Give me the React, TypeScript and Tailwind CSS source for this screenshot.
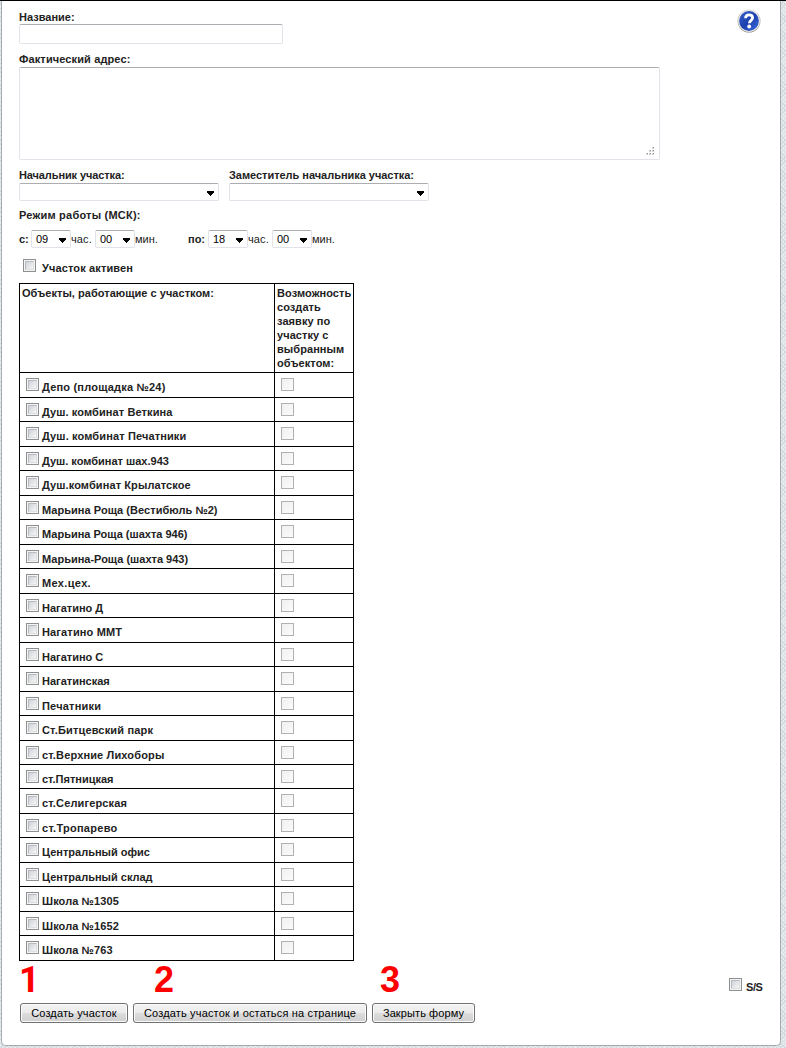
import React from "react";

const rows: [string, string][] = [
  ["Депо (площадка №24)", "tracking-[0.2px]"],
  ["Душ. комбинат Веткина", "tracking-[0.1px]"],
  ["Душ. комбинат Печатники", "tracking-[0.13px]"],
  ["Душ. комбинат шах.943", ""],
  ["Душ.комбинат Крылатское", "tracking-[0.1px]"],
  ["Марьина Роща (Вестибюль №2)", "tracking-[0.04px]"],
  ["Марьина Роща (шахта 946)", ""],
  ["Марьина-Роща (шахта 943)", ""],
  ["Мех.цех.", "tracking-[0.35px]"],
  ["Нагатино Д", ""],
  ["Нагатино ММТ", "tracking-[0.15px]"],
  ["Нагатино С", ""],
  ["Нагатинская", ""],
  ["Печатники", "tracking-[0.2px]"],
  ["Ст.Битцевский парк", "tracking-[0.17px]"],
  ["ст.Верхние Лихоборы", "tracking-[0.15px]"],
  ["ст.Пятницкая", ""],
  ["ст.Селигерская", "tracking-[0.15px]"],
  ["ст.Тропарево", "tracking-[0.27px]"],
  ["Центральный офис", ""],
  ["Центральный склад", ""],
  ["Школа №1305", "tracking-[0.1px]"],
  ["Школа №1652", "tracking-[0.1px]"],
  ["Школа №763", "tracking-[0.1px]"],
];

const objects = rows.map(([name, tracking], i) => ({
  name,
  tracking,
  h: (i < 16 ? i % 2 === 0 : i % 2 === 1) ? "h-[25px]" : "h-[24px]",
}));

function Box({ disabled = false }: { disabled?: boolean }) {
  return disabled ? (
    <span className="block size-[13px] shrink-0 border border-[#b1b1b1] bg-gradient-to-br from-[#f0f0f0] to-[#fbfbfb]" />
  ) : (
    <span className="block size-[13px] shrink-0 border border-[#8e8f8f] bg-[#f4f4f4] p-px">
      <span className="block size-[9px] border border-[#b8bcc2] border-r-[#dcdfe2] border-b-[#dcdfe2] bg-gradient-to-br from-[#cfd3d8] to-[#f6f6f6]" />
    </span>
  );
}

const field = "rounded-[2px] border border-[#e2e3ea] border-t-[#abadb3] bg-white";

function Select({ value = "", width }: { value?: string; width: string }) {
  return (
    <div className={`${field} ${width} flex h-[18px] shrink-0 items-center justify-between pr-[3px] pl-1 text-black`}>
      <span>{value}</span>
      <svg width="9" height="5" viewBox="0 0 9 5" className="mt-[3px]" shapeRendering="crispEdges">
        <path d="M1 0h7v1h-7zM1 1h7v1h-7zM2 2h5v1h-5zM3 3h3v1h-3zM4 4h1v1h-1z" fill="#000" />
      </svg>
    </div>
  );
}

function Button({ children, className }: { children: string; className: string }) {
  return (
    <button
      className={`${className} h-5 rounded-[3px] border border-[#707070] bg-[linear-gradient(#f2f2f2,#ebebeb_50%,#dddddd_50%,#cfcfcf)] text-[11px] leading-[14px] whitespace-nowrap text-black shadow-[inset_0_0_0_1px_#fbfbfb]`}
    >
      {children}
    </button>
  );
}

export default function App() {
  return (
    <div className="h-[1048px] w-[786px] overflow-hidden border-t border-black bg-[#e8edf0] bg-[repeating-linear-gradient(45deg,#d3dbe0_0_1px,transparent_1px_3px),repeating-linear-gradient(-45deg,#d3dbe0_0_1px,transparent_1px_3px)] pl-px font-['Liberation_Sans',Arial,sans-serif] text-[11px] leading-[14px] text-[#222]">
      <div className="h-[1045px] w-[780px] rounded-b-[5px] border border-t-0 border-[#a5aaac] bg-white pt-[9px] pl-[17px]">
        <div className="flex h-[34px] items-start justify-between pr-[19px]">
          <div>
            <div className="font-bold">Название:</div>
            <div className={`${field} h-5 w-[264px]`} />
          </div>
          <svg width="24" height="24" viewBox="0 0 24 24" className="-mt-px">
            <defs>
              <linearGradient id="rim" x1="0" y1="0" x2="0" y2="1">
                <stop offset="0" stopColor="#d8d8d8" />
                <stop offset="1" stopColor="#8c8c84" />
              </linearGradient>
              <linearGradient id="ball" x1="0" y1="0" x2="1" y2="1">
                <stop offset="0" stopColor="#3a63d0" />
                <stop offset="0.5" stopColor="#1c3fae" />
                <stop offset="1" stopColor="#3f6fe0" />
              </linearGradient>
            </defs>
            <circle cx="12" cy="12" r="11.5" fill="url(#rim)" />
            <circle cx="12" cy="12" r="10.8" fill="#f1f0ea" />
            <circle cx="12" cy="12" r="9.9" fill="url(#ball)" />
            <path d="M8.500 9.300C8.600 6.900 10.200 5.900 12.100 5.900c2.100 0 3.500 1.100 3.500 2.900 0 2.500-3.200 2.600-3.200 5.400" fill="none" stroke="#fff" strokeWidth="2.800" />
            <circle cx="12.200" cy="17.500" r="1.900" fill="#fff" />
          </svg>
        </div>
        <div className="mt-2 font-bold tracking-[0.12px]">Фактический адрес:</div>
        <div className={`${field} mt-px flex h-[93px] w-[641px] items-end justify-end pr-[5px] pb-1`}>
          <svg width="8" height="8" viewBox="0 0 8 8" shapeRendering="crispEdges">
            <path d="M6 0h2v2h-2zM3 3h2v2h-2zM6 3h2v2h-2zM0 6h2v2h-2zM3 6h2v2h-2zM6 6h2v2h-2z" fill="#d4d4d4" />
            <path d="M7 0h1v1h-1zM4 3h1v1h-1zM7 3h1v1h-1zM1 6h1v1h-1zM4 6h1v1h-1zM7 6h1v1h-1z" fill="#8f8f8f" />
          </svg>
        </div>
        <div className="mt-2 flex gap-[10px]">
          <div>
            <div className="mb-px font-bold tracking-[-0.11px]">Начальник участка:</div>
            <Select width="w-[200px]" />
          </div>
          <div>
            <div className="mb-px font-bold tracking-[-0.03px]">Заместитель начальника участка:</div>
            <Select width="w-[200px]" />
          </div>
        </div>
        <div className="mt-[7px] font-bold tracking-[0.22px]">Режим работы (МСК):</div>
        <div className="mt-2 flex h-[18px] items-center">
          <span className="w-3 font-bold">с:</span>
          <Select width="w-10" value="09" />
          <span className="w-6 tracking-[0.1px]">час.</span>
          <Select width="w-10" value="00" />
          <span className="w-[53px]">мин.</span>
          <span className="w-5 font-bold">по:</span>
          <Select width="w-10" value="18" />
          <span className="w-6 tracking-[0.1px]">час.</span>
          <Select width="w-10" value="00" />
          <span>мин.</span>
        </div>
        <div className="mt-[11px] flex h-6 pl-1 font-bold">
          <Box />
          <span className="mt-[2px] ml-[6px] tracking-[0.13px]">Участок активен</span>
        </div>
        <div className="w-[335px] border-t border-l border-black font-bold">
          <div className="flex h-[89px] border-b border-black">
            <div className="w-[255px] border-r border-black pt-[2px] pl-[2px] tracking-[0.03px]">Объекты, работающие с участком:</div>
            <div className="w-[79px] border-r border-black pt-[2px] pl-[2px] tracking-[0.07px]">
              Возможность
              <br />
              создать
              <br />
              заявку по
              <br />
              участку с
              <br />
              выбранным
              <br />
              объектом:
            </div>
          </div>
          {objects.map((o) => (
            <div key={o.name} className={`${o.h} flex border-b border-black`}>
              <div className="flex w-[255px] border-r border-black pt-[5px] pl-[6px]">
                <Box />
                <span className={`${o.tracking} mt-[2px] ml-[3px]`}>{o.name}</span>
              </div>
              <div className="w-[79px] border-r border-black pt-[5px] pl-[6px]">
                <Box disabled />
              </div>
            </div>
          ))}
        </div>
        <div className="flex h-[42px] justify-between pr-[18px] font-bold">
          <div className="flex pt-px text-[36px] leading-[36px] text-[#fe0000]">
            <span className="w-[135px] font-['Roboto',sans-serif]">1</span>
            <span className="w-[226px]">2</span>
            <span>3</span>
          </div>
          <div className="flex pt-[17px]">
            <Box />
            <span className="mt-[2px] ml-1 w-4 tracking-[-0.4px]">S/S</span>
          </div>
        </div>
        <div className="flex gap-[5px] pl-px">
          <Button className="w-[108px] tracking-[0.14px]">Создать участок</Button>
          <Button className="w-[234px] tracking-[0.16px]">Создать участок и остаться на странице</Button>
          <Button className="w-[103px] tracking-[0.1px]">Закрыть форму</Button>
        </div>
      </div>
    </div>
  );
}
